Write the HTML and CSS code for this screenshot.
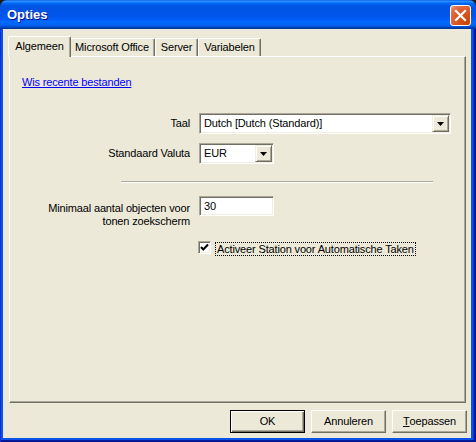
FILE: index.html
```html
<!DOCTYPE html>
<html>
<head>
<meta charset="utf-8">
<link rel="stylesheet" href="styles.css">
</head>
<body>
<div class="window">
  <div class="titlebar">
    <span class="title">Opties</span>
    <div class="close">
      <svg width="13" height="13" viewBox="0 0 13 13"><path d="M2 2 L11 11 M11 2 L2 11" stroke="#fff" stroke-width="2.2" stroke-linecap="square"/></svg>
    </div>
  </div>
  <div class="frame">
    <div class="client">
      <div class="tabs">
        <div class="tab active t1">Algemeen</div>
        <div class="tab t2">Microsoft Office</div>
        <div class="tab t3">Server</div>
        <div class="tab t4">Variabelen</div>
      </div>
      <div class="panel">
        <a class="link">Wis recente bestanden</a>
        <div class="row row-taal">
          <span class="lbl">Taal</span>
          <div class="combo wide">
            <span class="value">Dutch [Dutch (Standard)]</span>
            <span class="drop"><svg width="7" height="4" viewBox="0 0 7 4"><path d="M0 0h7L3.5 4z" fill="#000"/></svg></span>
          </div>
        </div>
        <div class="row row-valuta">
          <span class="lbl">Standaard Valuta</span>
          <div class="combo small">
            <span class="value">EUR</span>
            <span class="drop"><svg width="7" height="4" viewBox="0 0 7 4"><path d="M0 0h7L3.5 4z" fill="#000"/></svg></span>
          </div>
        </div>
        <div class="sep"></div>
        <div class="row row-min">
          <span class="lbl multi">Minimaal aantal objecten voor<br>tonen zoekscherm</span>
          <div class="input"><span class="value">30</span></div>
        </div>
        <div class="row row-check">
          <span class="checkbox"><svg width="9" height="9" viewBox="0 0 9 9"><path d="M1 4 L3.3 6.5 L8 1.5" stroke="#000" stroke-width="2" fill="none"/></svg></span>
          <span class="check-label">Activeer Station voor Automatische Taken</span>
        </div>
      </div>
      <div class="footer">
        <div class="btn default">OK</div>
        <div class="btn">Annuleren</div>
        <div class="btn"><u>T</u>oepassen</div>
      </div>
    </div>
  </div>
</div>
</body>
</html>
```

FILE: styles.css
```css
* { box-sizing: border-box; }
html, body { margin: 0; padding: 0; }
body {
  background: #1a1a1a;
  font-family: "Liberation Sans", Arial, sans-serif;
  font-size: 11px;
  letter-spacing: -0.15px;
  color: #000;
}
.window {
  width: 476px;
  height: 442px;
  display: flex;
  flex-direction: column;
  border-radius: 7px 7px 0 0;
  overflow: hidden;
}
.titlebar {
  height: 29px;
  flex: none;
  display: flex;
  align-items: flex-start;
  justify-content: space-between;
  padding: 0 5px 0 7px;
  background: linear-gradient(to bottom, #0058ee 0%, #3593ff 4%, #288eff 6%, #127dff 8%, #036ffc 10%, #0262ee 14%, #0057e5 20%, #0054e3 24%, #0055eb 56%, #005bf5 66%, #026afe 76%, #0062ef 86%, #0052d6 92%, #0040ab 96%, #003092 100%);
}
.title {
  margin-top: 7px;
  font-weight: bold;
  font-size: 13px;
  letter-spacing: 0;
  line-height: 16px;
  color: #fff;
  text-shadow: 1px 1px #0f1089;
}
.close {
  margin-top: 5px;
  width: 21px;
  height: 21px;
  border: 1px solid #fff;
  border-radius: 3px;
  background: radial-gradient(circle at 85% 85%, #c94400 0%, #dc5a2a 55%, #e2704a 80%, #f0a88a 100%);
  display: flex;
  align-items: center;
  justify-content: center;
}
.frame {
  flex: 1;
  display: flex;
  padding: 0 5px 4px 3px;
  background: #0a52e8;
  box-shadow: inset 1px 0 #0831d9, inset -1px 0 #00138c, inset 0 -1px #00138c, inset -2px 0 #001ea0, inset 0 -2px #001ea0, inset -3px 0 #003bda;
}
.client {
  flex: 1;
  display: flex;
  flex-direction: column;
  background: #ece9d8;
  padding: 7px 5px 5px 6px;
}
.tabs {
  display: flex;
  align-items: flex-end;
  height: 20px;
  flex: none;
  position: relative;
  z-index: 1;
}
.tab {
  height: 18px;
  border: 1px solid #fff;
  border-bottom: none;
  border-right-color: #716f64;
  box-shadow: inset -1px 0 #aca899;
  border-radius: 2px 2px 0 0;
  text-align: center;
  padding-top: 2px;
  line-height: 13px;
  background: #ece9d8;
  white-space: nowrap;
}
.tab.active {
  height: 21px;
  margin: 0 -2px -1px -1px;
  padding-top: 3px;
  position: relative;
  z-index: 2;
}
.t1 { width: 63px; }
.t2 { width: 86px; }
.t3 { width: 43px; }
.t4 { width: 63px; }
.panel {
  flex: 1;
  border-top: 1px solid #fff;
  border-left: 1px solid #fff;
  border-right: 1px solid #716f64;
  border-bottom: 1px solid #716f64;
  box-shadow: inset -1px -1px #aca899;
  padding: 19px 0 0 12px;
}
.link {
  display: block;
  width: max-content;
  color: #0000ff;
  text-decoration: underline;
  line-height: 13px;
}
.row {
  display: flex;
  align-items: center;
}
.lbl {
  width: 168px;
  text-align: right;
  margin-right: 9px;
  line-height: 13px;
  flex: none;
}
.row-taal { margin-top: 24px; }
.row-valuta { margin-top: 9px; }
.combo, .input {
  height: 21px;
  display: flex;
  align-items: center;
  background: #fff;
  border: 1px solid;
  border-color: #aca899 #fff #fff #aca899;
  box-shadow: inset 1px 1px #716f64, inset -1px -1px #f1efe2;
  padding: 2px 2px 2px 4px;
}
.combo.wide { width: 252px; }
.combo.small { width: 75px; }
.value { flex: 1; line-height: 13px; white-space: nowrap; }
.drop {
  width: 17px;
  height: 17px;
  margin-right: -1px;
  background: #ece9d8;
  border: 1px solid;
  border-color: #f1efe2 #716f64 #716f64 #f1efe2;
  box-shadow: inset 1px 1px #fff, inset -1px -1px #aca899;
  display: flex;
  align-items: center;
  justify-content: center;
}
.sep {
  margin: 17px 0 0 99px;
  width: 312px;
  height: 2px;
  border-top: 1px solid #aca899;
  border-bottom: 1px solid #fff;
}
.row-min {
  margin-top: 13px;
  align-items: flex-start;
}
.lbl.multi { margin-top: 6px; }
.input { width: 75px; height: 20px; }
.row-check {
  margin-top: 13px;
  margin-left: 176px;
  align-items: flex-start;
}
.checkbox {
  width: 13px;
  height: 13px;
  background: #fff;
  border: 1px solid;
  border-color: #aca899 #fff #fff #aca899;
  box-shadow: inset 1px 1px #716f64, inset -1px -1px #f1efe2;
  display: flex;
  align-items: center;
  justify-content: center;
}
.check-label {
  margin-left: 4px;
  margin-top: 1px;
  border: 1px dotted #000;
  padding: 0 1px;
  line-height: 12px;
  white-space: nowrap;
}
.footer {
  flex: none;
  margin-top: 7px;
  margin-right: -1px;
  display: flex;
  justify-content: flex-end;
  gap: 6px;
}
.btn {
  width: 75px;
  height: 23px;
  background: #ece9d8;
  border: 1px solid;
  border-color: #fff #716f64 #716f64 #fff;
  box-shadow: inset -1px -1px #aca899;
  display: flex;
  align-items: center;
  justify-content: center;
  line-height: 13px;
}
.btn.default {
  border-color: #000;
  box-shadow: inset 1px 1px #fff, inset -1px -1px #716f64, inset -2px -2px #aca899;
}
```
